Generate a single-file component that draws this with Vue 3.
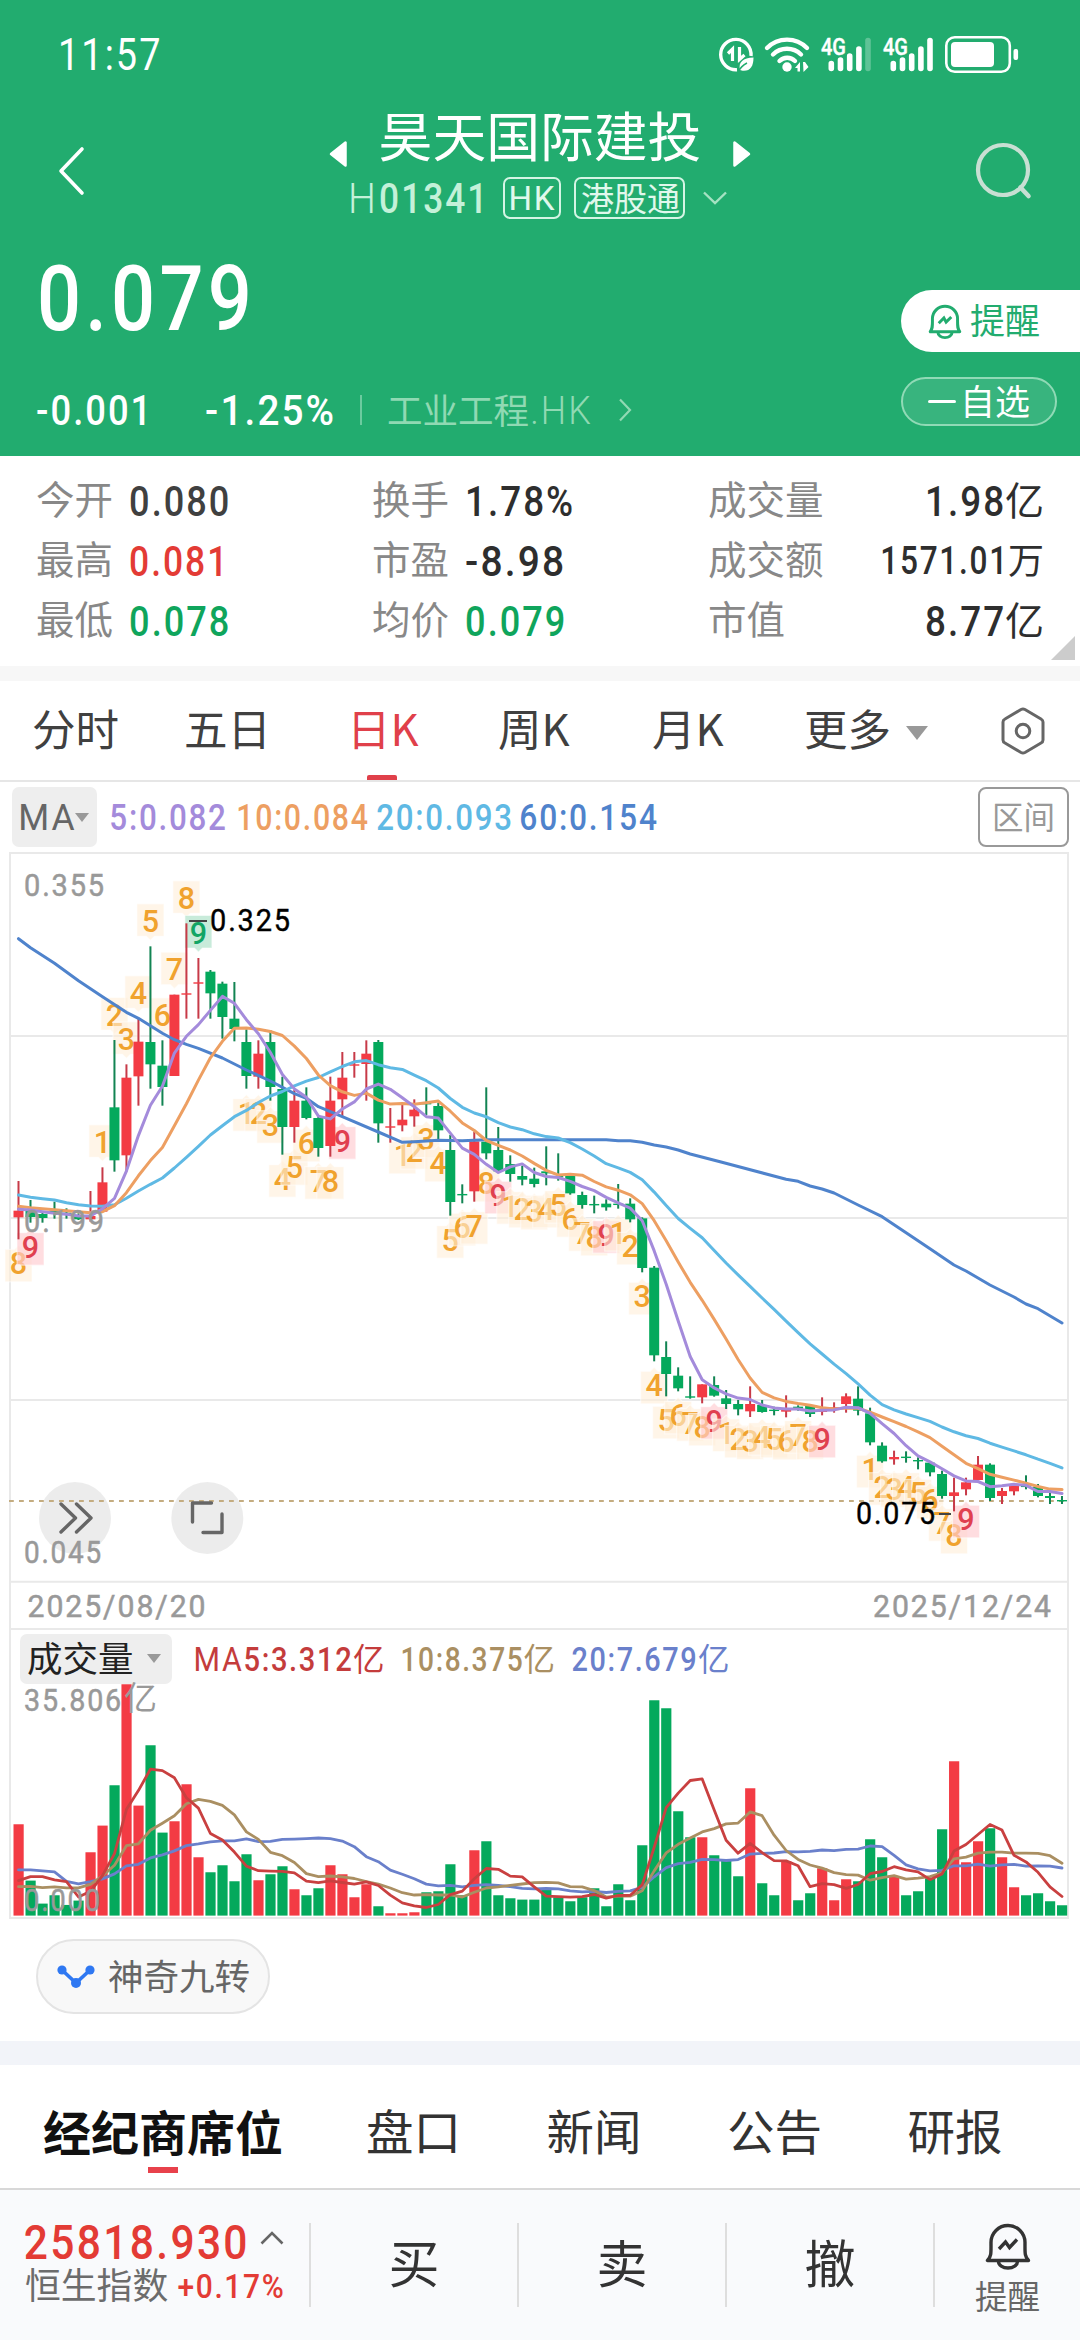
<script setup>
import { h } from 'vue'

// Single line of figures fitted to a given ink width and cap height
const CAP = 0.711
const Num = ({ t, w, c, wt = 500 }) => {
  const size = c / CAP
  const b = size * 0.045
  const gap = size * 0.055
  return h('svg', { width: w, height: c, style: 'display:block;overflow:visible;flex:none' }, [
    h('text', {
      x: -b, y: c, fill: 'currentColor',
      'font-family': 'Roboto, "Noto Sans CJK SC", sans-serif',
      'font-size': size, 'font-weight': wt, 'letter-spacing': gap,
      textLength: w + 2 * b + gap, lengthAdjust: 'spacingAndGlyphs',
    }, t),
  ])
}
Num.props = ['t', 'w', 'c', 'wt']

const stats = [
  [['今开', '0.080', 96, '#404040'], ['最高', '0.081', 94, '#e33b35'], ['最低', '0.078', 96, '#0fa55c']],
  [['换手', '1.78%', 104, '#2e2e2e'], ['市盈', '-8.98', 95, '#2e2e2e'], ['均价', '0.079', 96, '#0fa55c']],
]
const totals = [
  { k: '成交量', v: '1.98', w: 75, c: 30, u: '亿', s: 39 },
  { k: '成交额', v: '1571.01', w: 123, c: 27, u: '万', s: 36 },
  { k: '市值', v: '8.77', w: 75, c: 30, u: '亿', s: 39 },
]
const periods = [
  { t: '分时', x: 32 }, { t: '五日', x: 184 }, { t: '日K', x: 347, on: true },
  { t: '周K', x: 498 }, { t: '月K', x: 652 }, { t: '更多', x: 804, more: true },
]
const maLegend = [
  ['5:0.082', 113, '#a48bdb', 14], ['10:0.084', 128, '#ed9f62', 12],
  ['20:0.093', 132, '#5fb9e4', 11], ['60:0.154', 134, '#4f83cc', 0],
]
const infoTabs = ['经纪商席位', '盘口', '新闻', '公告', '研报']

// Candles: [direction, body top, body bottom, high, low], three units per pixel from y = 850
const shift = (d, list) => list.map(([k, a, b, t, l]) => [k, a + d, b + d, t + d, l + d])
const R = 1, G = 0
const candles = [
  ...shift(0, [
    [R,1082,1102,993,1168],[G,1083,1101,1050,1118],[G,1092,1104,1085,1118],[G,1082,1086,1055,1106],
    [G,1088,1092,1075,1106],[G,1096,1108,1090,1110],[R,1098,1108,1023,1115],[R,997,1085,952,1085],
    [G,772,931,570,965],[R,683,916,643,965],[R,575,679,505,767],[G,576,643,289,716],
    [G,647,711,571,767],[R,434,678,434,678],[R,432,432,220,506],[R,399,399,324,506],
    [G,365,430,360,506],[G,401,501,395,566],[G,506,537,396,574],[G,576,678,538,716],
    [R,611,680,571,716],[G,576,711,540,752],[G,717,831,680,914],[R,752,831,720,878],
    [G,752,804,712,808],[G,804,894,800,920],[R,752,888,680,920],[R,683,748,606,800],
    [R,645,645,606,683],[R,611,642,571,752],[G,576,820,570,878],[R,831,831,774,878],
  ]),
  ...shift(450, [
    [R,359,376,314,394],[R,329,349,298,380],[G,311,311,262,345],[G,318,391,308,418],
    [G,450,606,405,647],[G,584,584,553,610],[R,424,574,395,605],[G,425,460,262,478],
    [G,450,514,381,514],[G,492,522,466,545],[G,528,539,497,556],[G,536,552,503,562],
    [G,514,520,439,556],[G,528,530,460,542],[G,528,580,524,584],[G,585,615,575,626],
    [G,614,614,587,640],[G,611,622,598,632],[G,613,613,552,626],[G,611,658,595,667],
    [G,655,804,652,817],[G,803,1066,798,1084],[G,1071,1122,1024,1189],[G,1127,1165,1102,1174],
    [G,1191,1191,1129,1196],[R,1153,1192,1153,1210],[G,1155,1187,1129,1190],
  ]),
  ...shift(990, [
    [G,655,672,630,687],[G,672,688,660,706],[R,672,694,619,711],[G,675,696,660,698],
    [G,691,691,680,706],[R,688,695,646,712],[G,680,686,676,692],[G,678,702,672,711],
    [R,688,696,652,706],[R,684,684,667,698],[R,649,672,640,698],[G,656,692,619,706],
    [G,700,787,683,796],[G,797,844,787,848],[R,831,838,812,854],[G,832,832,814,848],
    [G,840,844,832,868],[G,848,877,843,889],[G,882,948,872,956],[R,937,948,893,994],
    [R,907,928,893,946],[R,854,900,828,900],[G,854,954,850,963],[R,933,948,924,972],
    [R,917,934,910,946],[G,917,921,886,928],[G,920,948,912,952],[G,948,954,938,972],
    [G,960,964,948,972],
  ]),
]
const px = i => 18.5 + i * 11.994
const py = v => 850 + v / 3

// Moving average; `head` holds the values before a full window exists
const average = (src, n, head) => src.map((_, i) =>
  i < head.length ? head[i] : src.slice(i - n + 1, i + 1).reduce((a, b) => a + b, 0) / n)
const toLine = (vals, fy) => vals.map((v, i) => `${px(i).toFixed(1)},${fy(v).toFixed(1)}`).join(' ')

const closes = candles.map(c => (c[0] ? c[1] : c[2]))
const ma60 = [[0,266],[1,293],[3,340],[5,392],[7,440],[9,487],[10,505],[11,527],[12,550],[13,569],[14,583],[15,595],[17,624],[19,660],[21,693],[23,731],[24,745],[25,770],[27,800],[30,846],[32,877],[33,875],[35,871],[37,872],[39,869],[49,869],[50,872],[51,872],[52,877],[53,885],[54,891],[55,900],[56,912],[58.5,935],[64,988],[65,994],[66,1008],[67,1017],[68,1029],[70,1065],[72,1100],[74,1148],[76,1196],[78,1245],[79,1263],[81,1305],[83,1341],[84,1362],[85,1376],[87,1419]]
const priceLines = [
  ['#4f83cc', ma60.map(([i, v]) => `${px(i).toFixed(1)},${py(v).toFixed(1)}`).join(' ')],
  ['#5fb9e4', toLine(average(closes, 20, [1035,1042,1046,1050,1058,1064,1068,1069,1064,1045,1023,1003,984,954,922,889,855,827,800]), py)],
  ['#ed9f62', toLine(average(closes, 10, [1069,1073,1076,1079,1082,1085,1088,1085,1067]), py)],
  ['#a48bdb', toLine(average(closes, 5, [1078,1080,1085,1090]), py)],
]

// Nine-turn counts: [first candle, first number, last number, above]
const runs = [[0,8,9,0],[7,1,9,1],[19,1,9,0],[32,1,9,0],[41,1,9,0],[50,1,9,0],[59,1,9,0],[71,1,9,0]]
const marks = runs.flatMap(([s, a, b, up]) =>
  Array.from({ length: b - a + 1 }, (_, k) => {
    const i = s + k, n = a + k, c = candles[i]
    return {
      i, n, up, x: px(i), y: up ? py(c[3]) - 42.5 : py(c[4]) + 10,
      kind: n < 9 ? 'step' : up ? 'sell' : 'buy',
    }
  }))
const badge = m => {
  const l = m.x - 13.5, r = m.x + 13.5, t = m.y, b = m.y + 32.5
  return m.up
    ? `M${l} ${t}H${r}V${b}H${m.x + 4}L${m.x} ${b + 4}L${m.x - 4} ${b}H${l}Z`
    : `M${l} ${t}H${m.x - 4}L${m.x} ${t - 4}L${m.x + 4} ${t}H${r}V${b}H${l}Z`
}

// Volumes, scaled so that 694 is 35.806亿
const volumes = [
  274,105,36,61,32,45,190,270,391,694,330,511,249,283,394,175,130,151,103,184,106,124,
  148,79,61,82,151,124,55,94,28,7,7,10,70,73,154,61,196,223,61,52,48,48,
  82,55,43,55,82,28,94,46,211,646,622,313,235,235,181,167,118,382,97,61,163,46,
  67,142,46,109,103,229,175,118,61,73,112,259,463,160,223,262,175,85,61,67,43,31,
]
const vy = v => 1915.6 - v / 3
const volLines = [
  ['#6a80cb', toLine(average(volumes, 20, [137,137,134,131,103,95,102,110,125,149,154,173,182,194,210,215,221,224,224]), vy)],
  ['#aa8f62', toLine(average(volumes, 10, [87,88,84,86,83,83,94,119,151]), vy)],
  ['#c94040', toLine(average(volumes, 5, [105,117,117,107]), vy)],
]
</script>

<template>
  <div class="page">
    <header class="head">
      <div class="status">
        <Num t="11:57" :w="98" :c="32" :wt="400" />
        <svg width="306" height="46" viewBox="716 30 306 46" fill="none" stroke="#fff">
          <path d="M737 68.700A15.200 15.200 0 1 1 751 55" stroke-width="3.400" />
          <path d="M728 52.500l4.500-4.500v12M739.500 46v12.500l5-4.500" stroke-width="3.200" />
          <path d="M740 69c-2-8 3-12 13.500-12.500c0 9-3.500 14-11 13.200z" fill="#fff" stroke="none" />
          <path d="M738 71c3-5.500 5-7 9-9" stroke="#22ac6f" stroke-width="1.600" />
          <path d="M767 47a28 28 0 0 1 40 0M773 53.500a20 20 0 0 1 28 0M779.500 60a11 11 0 0 1 15.500 0" stroke-width="4.400" stroke-linecap="round" />
          <circle cx="787" cy="66" r="4.700" fill="#fff" stroke="none" />
          <path d="M795 67l5-6v9.500h-2.500V67zM803 61h2l3.500 5l-5 5z" fill="#fff" stroke="none" />
          <g v-for="s in 2" :key="s" :transform="`translate(${(s - 1) * 62} 0)`">
            <text x="821" y="54" class="net" textLength="25" lengthAdjust="spacingAndGlyphs">4G</text>
            <path d="M831.300 62.500V67.500M840.500 59V67.500M849.700 55V67.500M858.900 48V67.500" stroke-width="5.600" stroke-linecap="round" />
            <path d="M868 39.500V67.500" stroke-width="5.600" stroke-linecap="round" :opacity="s === 1 ? 0.28 : 1" />
          </g>
          <rect x="946.300" y="36.200" width="63.500" height="34.600" rx="8.500" stroke-width="2.600" />
          <rect x="951" y="41" width="43" height="25" rx="4" fill="#fff" stroke="none" />
          <rect x="1013.500" y="48" width="4.600" height="11" rx="2" fill="#fff" stroke="none" />
        </svg>
      </div>

      <div class="nav">
        <svg width="30" height="50" viewBox="0 0 30 50"><path d="M26 3L5 25L26 47" fill="none" stroke="#fff" stroke-width="3.600" stroke-linecap="round" stroke-linejoin="round" /></svg>
        <div class="title">
          <div class="title-row">
            <svg width="18" height="26" viewBox="0 0 18 26"><path d="M1 13L15.500 1.500V24.500Z" fill="#fff" stroke="#fff" stroke-width="2.500" stroke-linejoin="round" /></svg>
            <h1>昊天国际建投</h1>
            <svg width="18" height="26" viewBox="0 0 18 26"><path d="M17 13L2.500 1.500V24.500Z" fill="#fff" stroke="#fff" stroke-width="2.500" stroke-linejoin="round" /></svg>
          </div>
          <div class="code-row">
            <Num t="H" :w="24" :c="30" :wt="300" /><Num class="code" t="01341" :w="104" :c="30" />
            <span class="tag hk"><Num t="HK" :w="43" :c="24" :wt="400" /></span>
            <span class="tag">港股通</span>
            <svg width="26" height="14" viewBox="0 0 26 14"><path d="M2 1.500L13 12L24 1.500" fill="none" stroke="#a5e2c2" stroke-width="2.400" /></svg>
          </div>
        </div>
        <svg width="60" height="60" viewBox="0 0 60 60" fill="none" stroke="#c8dfd3" stroke-width="4.200"><circle cx="29" cy="28" r="25" /><path d="M46.500 45.500L54.500 54" stroke-linecap="round" stroke-width="4.600" /></svg>
      </div>

      <div class="quote">
        <div>
          <Num class="price" t="0.079" :w="206" :c="65" />
          <div class="change">
            <Num t="-0.001" :w="111" :c="30" />
            <Num class="pct" t="-1.25%" :w="125" :c="30" />
            <i></i>
            <span>工业工程</span><Num class="hkx" t=".HK" :w="57" :c="27" :wt="300" />
            <svg width="14" height="24" viewBox="0 0 14 24"><path d="M2 1.500L12 12L2 22.500" fill="none" stroke="#90d9b3" stroke-width="2.200" /></svg>
          </div>
        </div>
        <div class="actions">
          <div class="remind">
            <svg width="34" height="34" viewBox="0 0 46 46" fill="none" stroke="#22ac6f" stroke-width="4"><path d="M3 37.500H43C39.500 33 40 30 40 20a17 17 0 0 0-34 0C6 30 6.500 33 3 37.500z" stroke-linejoin="round" /><path d="M13.500 38.500a9.500 7 0 0 0 19 0M14.500 26l7-7l3 5.500l7-7" /></svg>
            <span>提醒</span>
          </div>
          <div class="fav"><b></b><span>自选</span></div>
        </div>
      </div>
    </header>

    <section class="stats">
      <div v-for="(col, ci) in stats" :key="ci" class="col">
        <div v-for="s in col" :key="s[0]" class="stat">
          <span>{{ s[0] }}</span><Num :t="s[1]" :w="s[2]" :c="30" :style="{ color: s[3] }" />
        </div>
      </div>
      <div class="col wide">
        <div v-for="s in totals" :key="s.k" class="stat">
          <span>{{ s.k }}</span>
          <div class="total"><Num :t="s.v" :w="s.w" :c="s.c" /><em :style="{ fontSize: s.s + 'px' }">{{ s.u }}</em></div>
        </div>
      </div>
      <i class="fold"></i>
    </section>

    <nav class="periods">
      <div v-for="(p, i) in periods" :key="p.t" class="period" :class="{ on: p.on }" :style="{ width: (periods[i + 1]?.x ?? 1001) - p.x + 'px' }">
        <span>{{ p.t }}</span><i v-if="p.more"></i>
      </div>
      <svg width="44" height="48" viewBox="0 0 44 48" fill="none" stroke="#666" stroke-width="3"><path d="M20 2.500q2-1 4 0L40 12q2 1.200 2 3V33q0 2-2 3L24 45.500q-2 1-4 0L4 36q-2-1-2-3V15q0-2 2-3z" /><circle cx="22" cy="24" r="6.800" /></svg>
    </nav>

    <div class="legend">
      <div class="ma"><Num t="MA" :w="53" :c="26" :wt="400" /><i></i></div>
      <Num v-for="m in maLegend" :key="m[0]" :t="m[0]" :w="m[1]" :c="26" :style="{ color: m[2], marginRight: m[3] + 'px' }" />
      <div class="range">区间</div>
    </div>

    <section class="chart">
      <svg width="1056" height="776" viewBox="11 854 1056 776">
        <path d="M11 1036H1067M11 1218H1067M11 1400H1067M11 1581.700H1067M11 1629H1067" stroke="#e9e9e9" stroke-width="2" />
        <g fill="rgba(0,0,0,0.075)"><circle cx="75" cy="1518" r="36" /><circle cx="207.300" cy="1518" r="36" /></g>
        <path d="M9 1501H1069" stroke="#c4ac80" stroke-width="2" stroke-dasharray="4.800 5.200" />
        <g fill="none" stroke="#666" stroke-width="3.400" stroke-linecap="round" stroke-linejoin="round">
          <path d="M61 1504L75.500 1518L61 1532M76.500 1504L91 1518L76.500 1532" />
          <path d="M211.500 1503H192.500V1522M222 1514V1532.500H203" />
        </g>
        <g v-for="m in marks" :key="m.i" :class="m.kind">
          <path :d="badge(m)" class="badge" />
          <text :x="m.x" :y="m.y + (m.up ? 28 : 25)" class="digit">{{ m.n }}</text>
        </g>
        <g v-for="(c, i) in candles" :key="i" :fill="c[0] ? '#f33b44' : '#04a95c'">
          <rect :x="px(i) - 1" :y="py(c[3])" width="2" :height="(c[4] - c[3]) / 3" :fill="c[0] ? '#c73a48' : '#128453'" />
          <rect :x="px(i) - 5" :y="py(c[1]) - (c[1] === c[2] ? 0.7 : 0)" width="10" :height="Math.max(1.4, (c[2] - c[1]) / 3)" />
        </g>
        <polyline v-for="l in priceLines" :key="l[0]" :points="l[1]" fill="none" :stroke="l[0]" stroke-width="3" stroke-linejoin="round" stroke-linecap="round" />
        <g class="axis">
          <text x="24" y="895.500" textLength="82" lengthAdjust="spacingAndGlyphs">0.355</text>
          <text x="24" y="1232" textLength="82" lengthAdjust="spacingAndGlyphs">0.199</text>
          <text x="24" y="1563" textLength="79" lengthAdjust="spacingAndGlyphs">0.045</text>
          <text x="27.500" y="1617" textLength="180" lengthAdjust="spacingAndGlyphs">2025/08/20</text>
          <text x="873" y="1617" textLength="180" lengthAdjust="spacingAndGlyphs">2025/12/24</text>
        </g>
        <path d="M189 921H207M939 1514H951" stroke="#444" stroke-width="1.800" />
        <g class="peak">
          <text x="210" y="930.500" textLength="82" lengthAdjust="spacingAndGlyphs">0.325</text>
          <text x="856" y="1524" textLength="81" lengthAdjust="spacingAndGlyphs">0.075</text>
        </g>
      </svg>

      <div class="vol-head">
        <div class="picker"><span>成交量</span><i></i></div>
        <div class="vm first"><Num t="MA" :w="45" :c="24" :wt="400" /><Num class="n5" t="5:3.312" :w="105" :c="23.5" /><em>亿</em></div>
        <div class="vm second"><Num t="10:8.375" :w="119" :c="23.5" /><em>亿</em></div>
        <div class="vm third"><Num t="20:7.679" :w="122" :c="23.5" /><em>亿</em></div>
      </div>

      <svg width="1056" height="233" viewBox="11 1684 1056 233">
        <rect v-for="(v, i) in volumes" :key="i" :x="px(i) - 5" :y="vy(v)" width="10.200" :height="v / 3" :fill="candles[i][0] ? '#f33b44' : '#04a95c'" />
        <polyline v-for="l in volLines" :key="l[0]" :points="l[1]" fill="none" :stroke="l[0]" stroke-width="2.800" stroke-linejoin="round" stroke-linecap="round" />
        <g class="axis">
          <text x="24" y="1711" textLength="99" lengthAdjust="spacingAndGlyphs">35.806</text>
          <text x="124" y="1710" class="unit">亿</text>
          <text x="24" y="1911" textLength="78" lengthAdjust="spacingAndGlyphs">0.000</text>
        </g>
      </svg>
    </section>

    <div class="chips">
      <div class="chip">
        <svg width="38" height="26" viewBox="0 0 38 26"><path d="M5 6L19 19L33 6" fill="none" stroke="#2f78f2" stroke-width="3.600" /><circle cx="5" cy="6" r="4.600" fill="#2f78f2" /><circle cx="33" cy="6" r="4.600" fill="#2f78f2" /><circle cx="19" cy="19" r="5" fill="#2f78f2" /></svg>
        <span>神奇九转</span>
      </div>
    </div>

    <nav class="info-tabs">
      <span v-for="(t, i) in infoTabs" :key="t" :class="{ on: i === 0 }">{{ t }}</span>
    </nav>

    <footer class="bar">
      <div class="index">
        <div class="index-top">
          <Num t="25818.930" :w="219" :c="34.5" />
          <svg width="24" height="14" viewBox="0 0 24 14"><path d="M1.500 12.500L12 2L22.500 12.500" fill="none" stroke="#666" stroke-width="2.600" /></svg>
        </div>
        <div class="index-sub"><span>恒生指数</span><Num t="+0.17%" :w="103" :c="24" /></div>
      </div>
      <div class="trade">买</div>
      <div class="trade">卖</div>
      <div class="trade">撤</div>
      <div class="alarm">
        <svg width="46" height="46" viewBox="0 0 46 46" fill="none" stroke="#333" stroke-width="3.400"><path d="M2.500 37.500H43.500C39.500 33 40 30 40 19.500a17 17 0 0 0-34 0C6 30 6.500 33 2.500 37.500z" stroke-linejoin="round" /><path d="M13.500 38.500a9.500 6.500 0 0 0 19 0M14 26l6.500-7l4 5.500l7.500-8" /></svg>
        <span>提醒</span>
      </div>
    </footer>
  </div>
</template>

<style>
body { background: #fff; }
</style>

<style scoped>
.page { width: 1080px; height: 2340px; overflow: hidden; background: #fff; font-family: "Noto Sans CJK SC", sans-serif; line-height: 1; }
.page * { box-sizing: border-box; }
svg { display: block; overflow: visible; flex: none; }
em { font-style: normal; }

.head { height: 456px; background: #22ac6f; color: #fff; }
.status { height: 107px; padding: 0 58px 0 60px; display: flex; align-items: center; justify-content: space-between; }
.net { font: 500 23.5px Roboto, sans-serif; fill: #fff; stroke: #fff; stroke-width: 0.4; }
.nav { height: 120px; display: flex; }
.nav > svg:first-child { margin: 39px 0 0 56px; }
.nav > svg:last-child { margin: 35px 0 0 224px; }
.title { width: 420px; margin-left: 244px; }
.title-row { height: 54px; display: flex; justify-content: space-between; }
.title-row svg { margin-top: 34px; }
h1 { margin: 0; font-size: 53.8px; font-weight: 400; line-height: 54px; white-space: nowrap; }
.code-row { display: flex; align-items: center; height: 42px; margin-top: 16px; padding-left: 20px; color: #c4f1d9; }
.code { margin-left: 7px; }
.tag { height: 42px; border: 2px solid #d4f5e4; border-radius: 7px; padding: 0 5px; margin-left: 13px; width: 111px; color: #e0f8ec; font-size: 33px; line-height: 36px; white-space: nowrap; }
.tag.hk { padding: 7px 5px 0; margin-left: 18px; width: 58px; }
.code-row > svg:last-child { margin-left: 17px; }

.quote { display: flex; justify-content: space-between; padding: 38px 0 0 38px; }
.price { margin-left: 3px; }
.change { display: flex; align-items: center; margin-top: 65px; height: 30px; }
.pct { margin-left: 58px; }
.change i { width: 2px; height: 30px; background: #6ccb9f; margin: 0 25px 0 28px; }
.change span { font-size: 35.5px; color: #90d9b3; margin-top: -3px; }
.hkx { color: #90d9b3; margin-left: 3px; }
.change > svg:last-child { margin-left: 29px; }
.actions { width: 179px; padding-top: 25px; }
.remind { height: 62px; border-radius: 31px 0 0 31px; background: #fff; display: flex; align-items: center; padding-left: 27px; color: #22ac6f; font-size: 35px; }
.remind span { margin: -5px 0 0 8px; }
.fav { width: 156px; height: 49px; margin-top: 25px; border: 2px solid #90dab6; border-radius: 25px; background: #38b47e; display: flex; align-items: center; padding-left: 25px; font-size: 35px; }
.fav b { width: 28px; height: 3px; border-radius: 2px; background: #fff; margin-right: 4px; }
.fav span { margin-top: -5px; }

.stats { position: relative; height: 225px; padding: 13px 37px 0 36px; display: flex; border-bottom: 15px solid #f7f7f7; }
.col { width: 336px; }
.col.wide { width: 335px; }
.stat { height: 60px; display: flex; align-items: center; font-size: 38.5px; color: #888; }
.stat > span { margin: -4px 18px 0 0; }
.stat > svg { margin-top: 3px; }
.total { display: flex; align-items: center; margin-left: auto; color: #2e2e2e; }
.total svg { margin-top: 3px; }
.total em { margin: -2px -1px 0 3px; }
.fold { position: absolute; right: 5px; bottom: 6px; border: solid transparent; border-color: transparent transparent #ccc; border-width: 0 0 24px 24px; }

.periods { height: 101px; padding-left: 32px; border-bottom: 2px solid #e6e6e6; display: flex; align-items: center; }
.period { height: 99px; padding-top: 25px; display: flex; flex: none; font-size: 43.5px; color: #404040; position: relative; }
.period i { margin: 20px 0 0 15px; border: 11px solid transparent; border-top: 14px solid #999; border-bottom: 0; height: 0; }
.period.on { color: #e0404a; }
.period.on::after { content: ""; position: absolute; left: 20px; bottom: 0; width: 30px; height: 5px; border-radius: 2px 2px 0 0; background: #e0404a; }

.legend { height: 70px; padding: 5px 11px 5px 12px; display: flex; align-items: center; }
.ma { width: 85px; height: 60px; margin-right: 14px; background: #eee; border-radius: 7px; display: flex; align-items: center; padding-left: 8px; color: #666; }
.ma i { margin-left: 2px; border: 7px solid transparent; border-top: 9px solid #999; border-bottom: 0; }
.range { margin-left: auto; width: 91px; height: 60px; border: 2px solid #999; border-radius: 8px; font-size: 31.5px; line-height: 52px; text-align: center; color: #999; }

.chart { width: 1060px; height: 1067px; margin-left: 9px; border: 2px solid #e9e9e9; }
.axis text { font: 400 31.5px Roboto, sans-serif; letter-spacing: 2px; fill: #999; stroke: #999; stroke-width: 0.5; }
.axis .unit { font: 400 33px "Noto Sans CJK SC", sans-serif; stroke: none; }
.peak text { font: 400 31.5px Roboto, sans-serif; letter-spacing: 2px; fill: #000; stroke: #000; stroke-width: 0.4; }
.digit { font: 500 30.5px Roboto, sans-serif; text-anchor: middle; fill: #f0a22e; }
.badge { fill: rgba(255, 238, 216, 0.6); stroke: rgba(255, 255, 255, 0.5); stroke-width: 1.2; }
.buy .badge { fill: rgba(255, 203, 207, 0.65); }
.sell .badge { fill: rgba(170, 225, 198, 0.65); }
.buy .digit { fill: #e0404f; }
.sell .digit { fill: #12a564; }

.vol-head { height: 54px; padding: 4px 0 0 9px; display: flex; }
.picker { width: 152px; height: 50px; border-radius: 7px; background: #eee; padding: 5px 0 0 7px; display: flex; font-size: 35.5px; color: #222; }
.picker i { margin: 15px 0 0 13px; height: 0; border: 7px solid transparent; border-top: 9px solid #999; border-bottom: 0; }
.vm { display: flex; align-items: center; height: 50px; margin-left: 23px; }
.vm em { font-size: 31.5px; margin: -3px 0 0 3px; }
.n5 { margin-left: 5px; }
.first { color: #c43c3c; }
.second { color: #aa8f62; margin-left: 17px; }
.third { color: #6a80cb; margin-left: 18px; }

.chips { height: 146px; padding: 20px 0 0 36px; border-bottom: 24px solid #f2f4f9; }
.chip { width: 234px; height: 75px; border: 2px solid #e4e4e4; border-radius: 38px; background: #f8f8f8; display: flex; align-items: center; padding-left: 19px; font-size: 35.5px; color: #666; }
.chip span { margin: -4px 0 0 13px; }

.info-tabs { height: 125px; padding: 0 79px 0 43px; border-bottom: 2px solid #d8d8d8; display: flex; font-size: 47.5px; color: #333; }
.info-tabs span { padding-top: 41px; margin-right: 85.5px; white-space: nowrap; }
.info-tabs .on { color: #111; font-weight: 700; font-size: 48px; width: 240px; margin-right: 83px; }
.info-tabs .on::after { content: ""; display: block; width: 30px; height: 6px; margin: 13px auto 0; background: #e8414b; }

.bar { height: 150px; background: #f9fafc; display: flex; }
.index { width: 309px; padding: 34px 0 0 26px; color: #e33b35; }
.index-top { display: flex; }
.index-top svg + svg { margin: 7px 0 0 15px; }
.index-sub { display: flex; align-items: center; margin-top: 7px; }
.index-sub span { font-size: 35.8px; color: #6c6c6c; margin: 0 11px 0 -1px; }
.index-sub svg { margin-top: 5px; }
.trade { width: 208px; height: 84px; margin-top: 33px; border-left: 2px solid #dedede; text-align: center; font-size: 51px; line-height: 77px; color: #333; }
.alarm { width: 147px; height: 84px; margin-top: 33px; border-left: 2px solid #dedede; display: flex; flex-direction: column; align-items: center; font-size: 32.5px; color: #666; }
.alarm span { margin-top: 10px; }
</style>
